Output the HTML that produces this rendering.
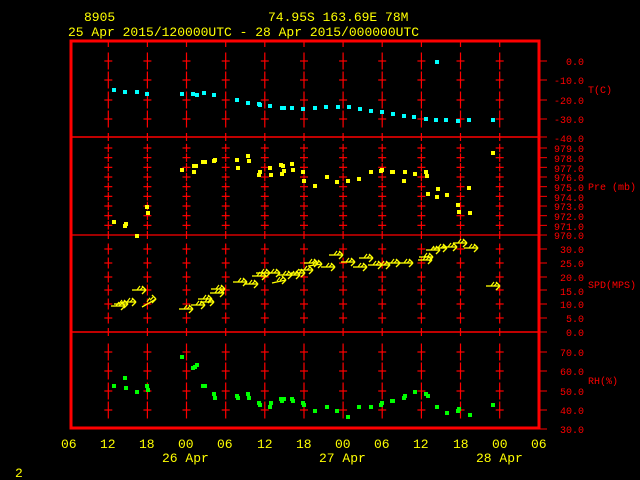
<!DOCTYPE html>
<html><head><meta charset="utf-8"><style>
html,body{margin:0;padding:0;background:#000;width:640px;height:480px;overflow:hidden}
svg{display:block}
text{font-family:"Liberation Mono","DejaVu Sans Mono",monospace}
</style></head><body>
<svg id="s" width="640" height="480" xmlns="http://www.w3.org/2000/svg">
<rect width="640" height="480" fill="#000"/>
<g fill="#ffff00" font-size="13">
<text x="84" y="21">8905</text>
<text x="268" y="21">74.95S  163.69E   78M</text>
<text x="68" y="36">25 Apr 2015/120000UTC - 28 Apr 2015/000000UTC</text>
<text x="61" y="448">06</text><text x="100" y="448">12</text><text x="139" y="448">18</text>
<text x="178" y="448">00</text><text x="217" y="448">06</text><text x="257" y="448">12</text>
<text x="296" y="448">18</text><text x="335" y="448">00</text><text x="374" y="448">06</text>
<text x="413" y="448">12</text><text x="453" y="448">18</text><text x="492" y="448">00</text>
<text x="531" y="448">06</text>
<text x="162" y="462">26 Apr</text><text x="319" y="462">27 Apr</text><text x="476" y="462">28 Apr</text>
<text x="15" y="477">2</text>
</g>
<g fill="#ff0000" font-size="10" text-anchor="end">
<text x="584" y="65">0.0</text><text x="584" y="84">-10.0</text><text x="584" y="104">-20.0</text>
<text x="584" y="123">-30.0</text><text x="584" y="142">-40.0</text>
<text x="584" y="152">979.0</text><text x="584" y="162">978.0</text><text x="584" y="172">977.0</text>
<text x="584" y="181">976.0</text><text x="584" y="191">975.0</text><text x="584" y="201">974.0</text>
<text x="584" y="210">973.0</text><text x="584" y="220">972.0</text><text x="584" y="230">971.0</text>
<text x="584" y="239">970.0</text>
<text x="584" y="253">30.0</text><text x="584" y="267">25.0</text><text x="584" y="281">20.0</text>
<text x="584" y="295">15.0</text><text x="584" y="308">10.0</text><text x="584" y="322">5.0</text>
<text x="584" y="336">0.0</text>
<text x="584" y="356">70.0</text><text x="584" y="375">60.0</text><text x="584" y="395">50.0</text>
<text x="584" y="414">40.0</text><text x="584" y="433">30.0</text>
</g>
<g fill="#ff0000" font-size="10">
<text x="588" y="93">T(C)</text>
<text x="588" y="190">Pre (mb)</text>
<text x="588" y="288">SPD(MPS)</text>
<text x="588" y="384">RH(%)</text>
</g>
<g id="g"></g>
</svg>
<script>
var g=document.getElementById('g'),h='';
function L(a,b,c,d,col,w){h+='<line x1="'+a+'" y1="'+b+'" x2="'+c+'" y2="'+d+'" stroke="'+col+'" stroke-width="'+(w||1)+'"/>';}
var R='#ff0000';
var xs=[108.3,147.4,186.5,225.7,264.8,304,343.1,382.2,421.4,460.5,499.7];
function panel(ticks,half){xs.forEach(function(x){ticks.forEach(function(t){L(x,t-half,x,t+half,R,1.2);L(x-4,t,x+4,t,R,1.2);});});}
panel([61,80,100,119],8.5);
var pt=[];for(var k=0;k<=9;k++)pt.push(148+9.67*k);
panel(pt.slice(0,9),4.2);
panel([249,263,277,290,304,318],5.5);
panel([352,371,391,410],8.5);
xs.forEach(function(x){[137,235,332].forEach(function(t){L(x,t-4,x,t+4,R,1.2);});L(x,41,x,47,R,1.2);});
L(71,137,540,137,R,1.5);L(71,235,540,235,R,1.2);L(71,332,540,332,R,1.5);
h+='<rect x="71" y="41" width="468" height="387" fill="none" stroke="'+R+'" stroke-width="3"/>';
[61,80,100,119,137].concat(pt).concat([249,263,277,290,304,318,332,352,371,391,410,429]).forEach(function(t){L(540,t,547,t,R,1);});
function sq(arr,col){arr.forEach(function(p){h+='<rect x="'+(p[0]-2)+'" y="'+(p[1]-2)+'" width="4" height="4" fill="'+col+'"/>';});}
sq([[114,90],[125,92],[137,92],[147,94],[182,94],[193,94],[197,95],[204,93],[214,95],[237,100],[248,103],[259,104],[260,105],[270,106],[282,108],[284,108],[292,108],[303,109],[315,108],[326,107],[338,107],[349,107],[360,109],[371,111],[382,112],[393,114],[404,116],[414,117],[426,119],[436,120],[446,120],[458,121],[469,120],[493,120],[437,62]],'#00ffff');
sq([[114,222],[125,226],[126,224],[147,207],[148,213],[137,236],[182,170],[194,166],[196,166],[194,172],[203,162],[205,162],[214,161],[215,160],[237,160],[238,168],[248,156],[249,161],[260,172],[259,175],[270,168],[271,175],[281,165],[283,166],[284,171],[282,174],[292,164],[293,170],[303,172],[304,181],[315,186],[327,177],[337,182],[348,181],[359,179],[371,172],[381,171],[382,170],[392,172],[393,172],[405,172],[404,181],[415,174],[426,172],[427,176],[428,194],[438,189],[437,197],[447,195],[458,205],[459,212],[470,213],[469,188],[493,153]],'#ffff00');
sq([[114,386],[125,378],[126,388],[137,392],[147,386],[148,390],[182,357],[193,368],[197,365],[195,367],[203,386],[205,386],[214,394],[215,398],[237,396],[238,398],[248,394],[249,398],[259,403],[260,405],[271,403],[270,407],[281,399],[284,399],[282,401],[292,399],[293,401],[303,403],[304,405],[315,411],[327,407],[337,411],[348,417],[359,407],[371,407],[381,405],[382,403],[392,401],[393,401],[404,398],[405,396],[415,392],[426,394],[428,396],[437,407],[447,413],[458,411],[459,409],[470,415],[493,405]],'#00ff00');
var Y='#ffff00';
function ar(x,y,dy){dy=dy||0;L(x-14,y+dy,x,y,Y,1.3);L(x-4,y-4,x,y,Y,1.3);L(x-4,y+4,x,y,Y,1.3);L(x-9,y+dy*0.35,x-6,y-4+dy*0.35,Y,1.2);L(x-6,y+dy*0.15,x-3,y-3+dy*0.15,Y,1.2);}
[[125,306],[136,302],[146,290],[156,299,8],[193,309],[205,305],[214,302],[225,289],[224,293],[247,282],[258,284],[270,273],[280,273],[292,275],[300,275],[313,270],[318,263],[343,255],[355,262],[335,267],[367,267],[382,265],[390,265],[400,263],[413,263],[433,257],[447,248],[457,247],[467,243],[478,248],[500,286],[128,304],[212,299],[266,276],[286,280,3],[305,273],[322,264,2],[373,258],[432,260],[440,250]].forEach(function(a){ar(a[0],a[1],a[2]);});
g.innerHTML=h;
</script>
</body></html>
